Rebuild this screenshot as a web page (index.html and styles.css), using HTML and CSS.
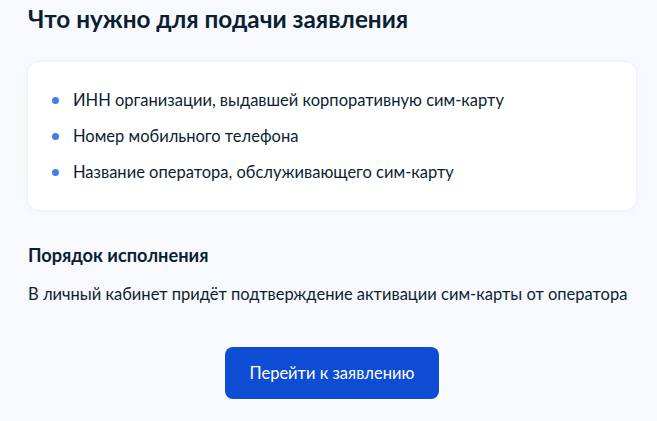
FILE: index.html
```html
<!DOCTYPE html>
<html lang="ru">
<head>
<meta charset="utf-8">
<link rel="stylesheet" href="styles.css">
</head>
<body>
<main class="page">
  <h2 class="title">Что нужно для подачи заявления</h2>
  <section class="card">
    <ul class="list">
      <li class="item">ИНН организации, выдавшей корпоративную сим-карту</li>
      <li class="item">Номер мобильного телефона</li>
      <li class="item">Название оператора, обслуживающего сим-карту</li>
    </ul>
  </section>
  <h3 class="subtitle">Порядок исполнения</h3>
  <p class="text">В личный кабинет придёт подтверждение активации сим-карты от оператора</p>
  <div class="actions">
    <button class="btn" type="button">Перейти к заявлению</button>
  </div>
</main>
</body>
</html>
```

FILE: styles.css
```css
html, body {
  margin: 0;
  padding: 0;
  background: #f8f9fd;
}
body {
  font-family: Lato, "Noto Sans", sans-serif;
  color: #0b1f33;
}
.page {
  padding: 3px 21px 0 28px;
  display: flex;
  flex-direction: column;
}
.title {
  margin: 0;
  font-size: 24.3px;
  line-height: 32px;
  font-weight: 700;
}
.card {
  margin-top: 27px;
  background: #ffffff;
  border-radius: 12px;
  box-shadow: 0 0 4px rgba(210, 220, 240, 0.5);
  padding: 26px 24px 26px 24px;
}
.list {
  margin: 0;
  padding: 0;
  list-style: none;
  display: flex;
  flex-direction: column;
  gap: 12px;
}
.item {
  position: relative;
  padding-left: 21px;
  font-size: 16.5px;
  line-height: 24px;
}
.item::before {
  content: "";
  position: absolute;
  left: 0;
  top: 9px;
  width: 7px;
  height: 7px;
  border-radius: 50%;
  background: #3e7ef3;
}
.subtitle {
  margin: 33px 0 0;
  font-size: 18.2px;
  line-height: 24px;
  font-weight: 700;
}
.text {
  margin: 15px 0 0;
  font-size: 16.5px;
  line-height: 24px;
}
.actions {
  display: flex;
  justify-content: center;
  margin-top: 41px;
}
.btn {
  font-family: Lato, "Noto Sans", sans-serif;
  font-size: 16.5px;
  color: #ffffff;
  background: #0d4cd3;
  border: none;
  border-radius: 8px;
  width: 214px;
  height: 52px;
}
```
